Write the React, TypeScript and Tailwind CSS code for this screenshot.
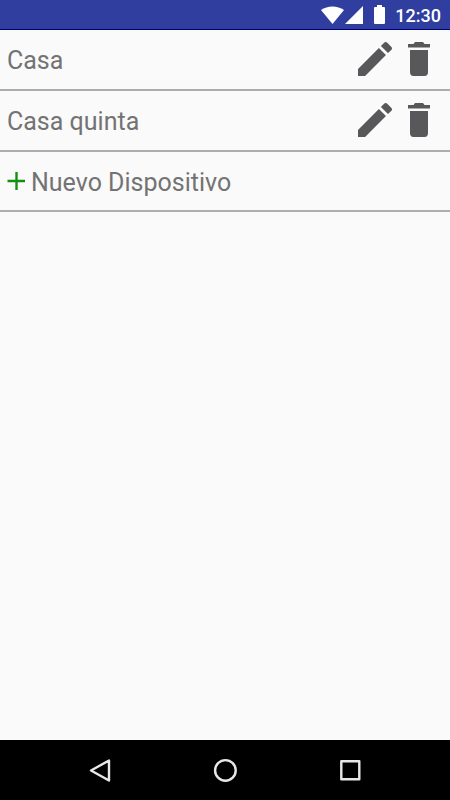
import { useState } from "react"

interface Device {
  id: number
  name: string
}

const initialDevices: Device[] = [
  { id: 1, name: "Casa" },
  { id: 2, name: "Casa quinta" },
]

const StatusBar: React.FC = () => (
  <header className="flex h-[30px] items-center justify-end border-b border-[#00007b] bg-[#303f9f] pr-[9px] text-white">
    <svg className="h-[18px] w-[23px]" viewBox="0 0 23 18" fill="currentColor" aria-hidden="true">
      <path d="M0 4C6.6-.8 16.4-.8 23 4L11.5 18z" />
    </svg>
    <svg className="ml-px h-[18px] w-[18px]" viewBox="0 0 18 18" fill="currentColor" aria-hidden="true">
      <path d="M18 0v18H0z" />
    </svg>
    <svg className="ml-[11px] h-[19px] w-[11px]" viewBox="0 0 11 19" fill="currentColor" aria-hidden="true">
      <path d="M3 0h5v2h2q1 0 1 1v15q0 1-1 1H1q-1 0-1-1V3q0-1 1-1h2z" />
    </svg>
    <span className="ml-[10px] pt-0.5 text-[18px] leading-5 font-medium">12:30</span>
  </header>
)

const PencilIcon: React.FC = () => (
  <svg className="h-[34px] w-[34px]" viewBox="3 3 18 18" fill="currentColor" aria-hidden="true">
    <path d="M3 17.25V21h3.75L17.81 9.94l-3.75-3.75L3 17.25zM20.71 7.04c.39-.39.39-1.02 0-1.41l-2.34-2.34c-.39-.39-1.02-.39-1.41 0l-1.83 1.83 3.75 3.75 1.83-1.83z" />
  </svg>
)

const TrashIcon: React.FC = () => (
  <svg className="h-[34px] w-[22px]" viewBox="0 0 22 34" fill="currentColor" aria-hidden="true">
    <path d="M2 8h18v22q0 4-3.5 4h-11Q2 34 2 30zM7 0h8l1.5 2H22v3.6H0V2h5.5z" />
  </svg>
)

interface DeviceRowProps {
  device: Device
  onDelete: (id: number) => void
}

const DeviceRow: React.FC<DeviceRowProps> = ({ device, onDelete }) => (
  <li className="flex h-[61px] items-center border-b-2 border-[#adadad] pr-5 pb-px pl-[7px]">
    <span className="flex-1 pt-1 text-[25px] leading-8">{device.name}</span>
    <button type="button" aria-label={`Editar ${device.name}`} className="mr-4 text-[#58585a]">
      <PencilIcon />
    </button>
    <button
      type="button"
      aria-label={`Eliminar ${device.name}`}
      className="text-[#58585a]"
      onClick={() => onDelete(device.id)}
    >
      <TrashIcon />
    </button>
  </li>
)

const NavigationBar: React.FC = () => (
  <nav className="flex h-[60px] items-center justify-center gap-[101px] bg-black text-[#e8e8e8]">
    <button type="button" aria-label="Atrás">
      <svg className="h-6 w-6" viewBox="0 0 24 24" fill="none" stroke="currentColor" strokeWidth="2.4" strokeLinejoin="round" aria-hidden="true">
        <path d="M21 2.5v20L3 12.5z" />
      </svg>
    </button>
    <button type="button" aria-label="Inicio">
      <svg className="h-6 w-6" viewBox="0 0 24 24" fill="none" stroke="currentColor" strokeWidth="2.4" aria-hidden="true">
        <circle cx="12.4" cy="12.4" r="10.3" />
      </svg>
    </button>
    <button type="button" aria-label="Recientes">
      <svg className="h-6 w-6" viewBox="0 0 24 24" fill="none" stroke="currentColor" strokeWidth="2.4" strokeLinejoin="round" aria-hidden="true">
        <path d="M3.3 3.3h18v18h-18z" />
      </svg>
    </button>
  </nav>
)

const App: React.FC = () => {
  const [devices, setDevices] = useState<Device[]>(initialDevices)

  const onDelete = (id: number) => {
    setDevices(devices.filter((device) => device.id !== id))
  }

  const onAdd = () => {
    setDevices([...devices, { id: Date.now(), name: "Dispositivo" }])
  }

  return (
    <div className="flex min-h-screen flex-col bg-[#fafafa] font-['Roboto',sans-serif] text-[#737373]">
      <StatusBar />
      <main className="flex-1">
        <ul>
          {devices.map((device) => (
            <DeviceRow key={device.id} device={device} onDelete={onDelete} />
          ))}
        </ul>
        <button
          type="button"
          className="flex h-[60px] w-full items-center gap-[6px] border-b-2 border-[#adadad] pl-[7px] text-[25px] leading-8"
          onClick={onAdd}
        >
          <svg className="h-[18px] w-[18px]" viewBox="0 0 18 18" fill="none" stroke="#149011" strokeWidth="2.4" aria-hidden="true">
            <path d="M9.5 0v18M.5 9h17.5" />
          </svg>
          <span className="pt-1">Nuevo Dispositivo</span>
        </button>
      </main>
      <NavigationBar />
    </div>
  )
}

export default App
